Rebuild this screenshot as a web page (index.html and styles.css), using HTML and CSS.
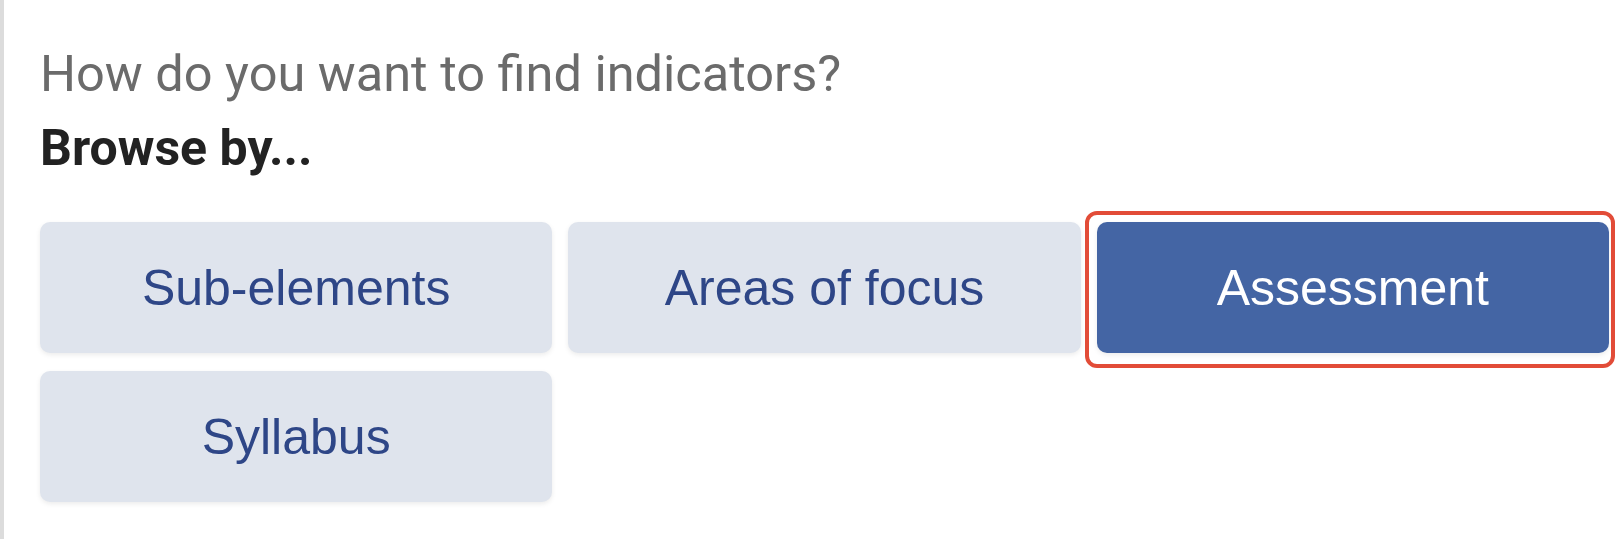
FILE: index.html
```html
<!DOCTYPE html>
<html>
<head>
<meta charset="utf-8">
<link rel="stylesheet" href="styles.css">
</head>
<body>
<div class="panel">
  <p class="question">How do you want to find indicators?</p>
  <p class="browse">Browse by...</p>
  <div class="options">
    <button class="opt">Sub-elements</button>
    <button class="opt">Areas of focus</button>
    <div class="highlight-wrap">
      <button class="opt active">Assessment</button>
      <span class="highlight"></span>
    </div>
    <button class="opt">Syllabus</button>
  </div>
</div>
</body>
</html>
```
FILE: styles.css
```css
html, body {
  margin: 0;
  padding: 0;
  background: #ffffff;
}
.panel {
  box-sizing: border-box;
  height: 539px;
  border-left: 4px solid #dcdcdc;
  padding: 46px 8px 0 36px;
  font-family: Roboto, "Liberation Sans", sans-serif;
}
.question {
  margin: 0;
  font-size: 50.5px;
  line-height: 56px;
  color: #6b6b6b;
}
.browse {
  margin: 18px 0 0 0;
  font-size: 50px;
  line-height: 56px;
  font-weight: 700;
  color: #222222;
}
.options {
  margin-top: 46px;
  display: grid;
  grid-template-columns: repeat(3, 1fr);
  column-gap: 16px;
  row-gap: 18px;
}
.opt {
  display: block;
  width: 100%;
  height: 131px;
  border: none;
  border-radius: 10px;
  background: #dfe4ed;
  color: #2e4687;
  font-family: "Liberation Sans", Arial, sans-serif;
  font-size: 50px;
  box-shadow: 0 2px 5px rgba(0, 0, 0, 0.08);
  cursor: pointer;
  padding: 0;
}
.opt.active {
  background: #4465a4;
  color: #ffffff;
}
.highlight-wrap {
  position: relative;
}
.highlight {
  position: absolute;
  left: -12px;
  top: -11px;
  right: -6px;
  bottom: -15px;
  border: 4px solid #e24c38;
  border-radius: 12px;
  pointer-events: none;
}
```
